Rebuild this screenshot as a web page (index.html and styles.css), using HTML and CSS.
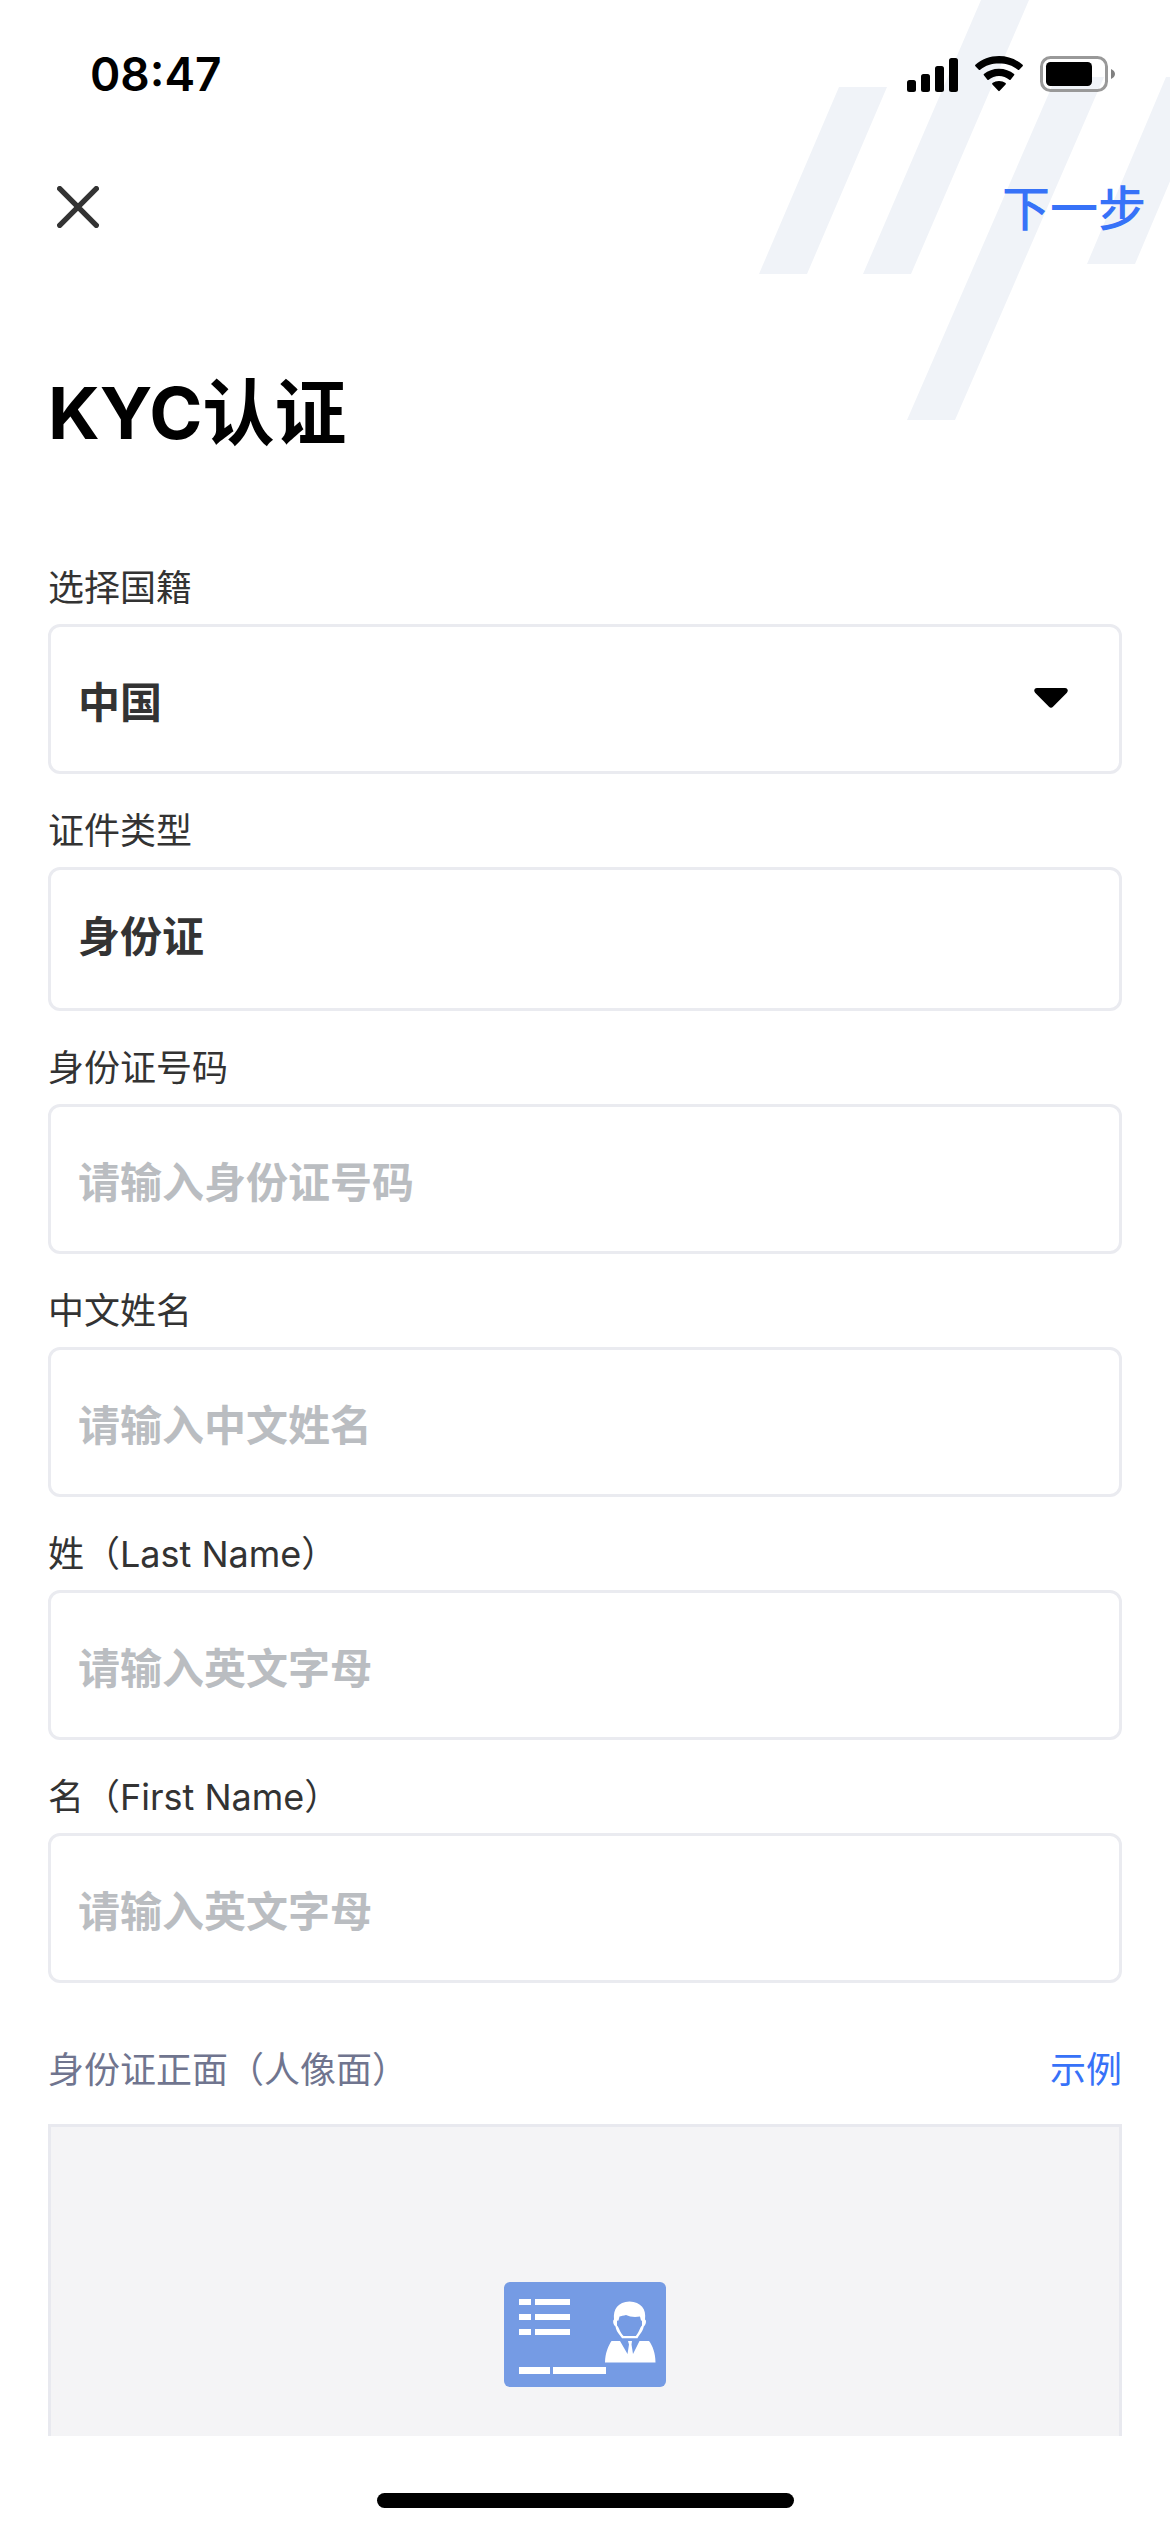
FILE: index.html
```html
<!DOCTYPE html>
<html lang="zh-CN">
<head>
  <meta charset="utf-8">
  <meta name="viewport" content="width=device-width, initial-scale=1">
  <title>KYC认证</title>
  <link rel="stylesheet" href="styles.css">
</head>
<body>
  <div class="screen">
    <svg class="stripes" viewBox="0 0 430 430" aria-hidden="true">
      <path d="M99 87h48L67 274H19zM241 0h48L171 274h-48zM316 77h48L215 420h-48zM426 77h48L395 264h-48z"/>
    </svg>

    <div class="status-bar">
      <time class="clock">08:47</time>
      <div class="indicators">
        <svg width="51" height="36" viewBox="0 0 51 36" aria-hidden="true">
          <rect x="0" y="24" width="9" height="12" rx="2.5"/>
          <rect x="14" y="18" width="9" height="18" rx="2.5"/>
          <rect x="28" y="10" width="9" height="26" rx="2.5"/>
          <rect x="42" y="2" width="9" height="34" rx="2.5"/>
        </svg>
        <svg width="48" height="36" viewBox="0 0 48 36" aria-hidden="true">
          <path d="M.4 10.2a1 1 0 0 1 0-1.4C6.800 3.200 15 0 24 0s17.200 3.200 23.600 8.800a1 1 0 0 1 0 1.400l-3.400 3.500a1 1 0 0 1-1.400 0C37.600 9.300 31.100 7.400 24 7.400S10.400 9.300 5.200 13.700a1 1 0 0 1-1.400 0z"/>
          <path d="M8.900 19.300a1 1 0 0 1 0-1.400C13 14.800 18.200 12.800 24 12.800s11 2 15.100 5.100a1 1 0 0 1 0 1.400l-3.500 4.500a1 1 0 0 1-1.300 0C31.400 21.500 27.900 20 24 20s-7.400 1.500-10.300 3.800a1 1 0 0 1-1.300 0z"/>
          <path d="M17.400 28.500a1 1 0 0 1 0-1.400C19.200 25.800 21.500 25 24 25s4.800.8 6.600 2.100a1 1 0 0 1 0 1.400l-5.900 6.300a1 1 0 0 1-1.400 0z"/>
        </svg>
        <svg width="75" height="36" viewBox="0 0 75 36" aria-hidden="true">
          <rect x="1.500" y="1.500" width="65" height="33" rx="9" fill="none" stroke="#999" stroke-width="3"/>
          <rect x="6" y="6" width="46" height="24" rx="4.500"/>
          <path d="M71 13c2.400 1 4 2.800 4 5s-1.600 4-4 5z" fill="#808080"/>
        </svg>
      </div>
    </div>

    <header class="nav-bar">
      <button class="close" type="button" aria-label="关闭">
        <svg width="42" height="42" viewBox="0 0 42 42" aria-hidden="true">
          <path d="M2.700 2.700l36.600 36.600M39.300 2.700L2.700 39.300" fill="none" stroke="#333" stroke-width="5.400" stroke-linecap="round"/>
        </svg>
      </button>
      <button class="next" type="submit" form="kyc">下一步</button>
    </header>

    <main class="content">
      <h1 class="title">KYC认证</h1>
      <form class="form" id="kyc">
        <div class="field">
          <label class="label" for="country">选择国籍</label>
          <div class="select-box">
            <select class="control" id="country"><option>中国</option></select>
            <svg class="caret" width="34" height="20" viewBox="0 0 34 20" aria-hidden="true">
              <path d="M3 0h28c2.800 0 3.600 3 1.900 4.700L19 18.800c-1.200 1.200-2.800 1.200-4 0L1.100 4.700C-.6 3 .2 0 3 0z"/>
            </svg>
          </div>
        </div>
        <div class="field">
          <label class="label" for="doc-type">证件类型</label>
          <input class="control control-fixed" id="doc-type" type="text" value="身份证" readonly>
        </div>
        <div class="field">
          <label class="label" for="id-number">身份证号码</label>
          <input class="control" id="id-number" type="text" placeholder="请输入身份证号码">
        </div>
        <div class="field">
          <label class="label" for="full-name">中文姓名</label>
          <input class="control" id="full-name" type="text" placeholder="请输入中文姓名">
        </div>
        <div class="field">
          <label class="label" for="last-name">姓（Last Name）</label>
          <input class="control" id="last-name" type="text" placeholder="请输入英文字母">
        </div>
        <div class="field">
          <label class="label" for="first-name">名（First Name）</label>
          <input class="control" id="first-name" type="text" placeholder="请输入英文字母">
        </div>

        <section class="upload">
          <div class="upload-head">
            <h2 class="upload-title" id="front-title">身份证正面（人像面）</h2>
            <a class="example" href="#front-title">示例</a>
          </div>
          <button class="upload-box" type="button" aria-labelledby="front-title">
            <svg width="162" height="105" viewBox="0 0 162 105" aria-hidden="true">
              <rect width="162" height="105" rx="6" fill="#759be4"/>
              <g fill="#fff">
                <path d="M15 17h12v6H15zM31 17h35v6H31zM15 32h12v6H15zM31 32h35v6H31zM15 47h12v6H15zM31 47h35v6H31zM15 85h31v7H15zM49 85h53v7H49z"/>
                <path d="M110 37.500C109 27 114 20 125.500 19.500C137 20 142.500 27 141 37.500C142.800 38 142 43 139.800 44.500C138.500 50 135.500 52.500 133.500 56.200H118C115.500 52.500 112.500 50 111.500 44.500C109 43 108.500 38 110 37.500zM114.500 38.500L113 38.800V43.500C115 45 115.800 50.500 119.500 54H131.800C135.200 50.500 136 45 138 43.500V38.800L137 38.500L136 34.500C131 35.500 126 35 122 33C119.500 33.500 117 34 115.500 34.500z" fill-rule="evenodd"/>
                <path d="M101 80.500C101 71 104.500 63.500 107.500 59H116L123.500 72L125 62.500L124 59H128L127.500 62.500L129 72L135.500 59H145C148.500 63.500 151.500 71 151.500 80.500z"/>
              </g>
            </svg>
          </button>
        </section>
      </form>
    </main>

    <footer class="home-area"><div class="home-indicator"></div></footer>
  </div>
</body>
</html>
```
FILE: styles.css
```css
* {
  box-sizing: border-box;
}

body {
  margin: 0;
  background: #fff;
  color: #333;
  font-family: Inter, "Noto Sans CJK SC", sans-serif;
}

button,
input,
select {
  font-family: inherit;
}

.screen {
  position: relative;
  display: flex;
  flex-direction: column;
  height: 100vh;
  overflow: hidden;
}

.stripes {
  position: absolute;
  top: 0;
  right: 0;
  z-index: -1;
  width: 430px;
  height: 430px;
  fill: #f0f3f8;
}

/* System status bar */
.status-bar {
  display: flex;
  flex: none;
  align-items: center;
  justify-content: space-between;
  height: 147px;
  padding: 0 55px 0 90px;
}

.clock {
  color: #000;
  font-size: 46px;
  font-weight: 600;
  line-height: 56px;
}

.indicators {
  display: flex;
  gap: 17px;
}

/* Navigation */
.nav-bar {
  display: flex;
  flex: none;
  align-items: center;
  justify-content: space-between;
  height: 120px;
  padding: 0 24px 0 48px;
}

.close,
.next {
  padding: 0;
  border: 0;
  background: none;
}

.close {
  display: flex;
  padding: 9px;
}

.next {
  padding-top: 4px;
  color: #3772f8;
  font-size: 48px;
  font-weight: 500;
  line-height: 72px;
}

/* Scrolling form */
.content {
  flex: 1;
  min-height: 0;
  padding: 96px 48px 0;
  overflow-y: auto;
  scrollbar-width: none;
}

.title {
  margin: 0 0 66px;
  color: #000;
  font-size: 72px;
  font-weight: 700;
  line-height: 100px;
}

.field {
  display: flex;
  flex-direction: column;
  gap: 9px;
  padding-top: 30px;
}

.field:first-child {
  padding-top: 32px;
}

.label {
  font-size: 36px;
  line-height: 54px;
}

.control {
  width: 100%;
  height: 150px;
  padding: 6px 27px 0;
  border: 3px solid #eaebf0;
  border-radius: 12px;
  outline: 0;
  background: #fff;
  color: #333;
  font-size: 42px;
  font-weight: 600;
  appearance: none;
}

.control::placeholder {
  color: #babdc1;
  opacity: 1;
}

.control-fixed {
  height: 144px;
  padding: 0 27px 12px;
}

.select-box {
  position: relative;
  display: flex;
}

.caret {
  position: absolute;
  top: 64px;
  right: 54px;
  pointer-events: none;
}

/* Document upload */
.upload-head {
  display: flex;
  align-items: center;
  justify-content: space-between;
  padding: 60px 0 27px;
}

.upload-title {
  margin: 0;
  color: #70758f;
  font-size: 36px;
  font-weight: 400;
  line-height: 54px;
}

.example {
  color: #3772f8;
  font-size: 36px;
  line-height: 54px;
  text-decoration: none;
}

.upload-box {
  display: flex;
  align-items: center;
  justify-content: center;
  width: 100%;
  height: 420px;
  border: 3px solid #e8e9ef;
  background: #f4f4f6;
}

.home-area {
  display: flex;
  flex: none;
  justify-content: center;
  height: 96px;
  padding-top: 57px;
}

.home-indicator {
  width: 417px;
  height: 15px;
  border-radius: 8px;
  background: #000;
}
```
